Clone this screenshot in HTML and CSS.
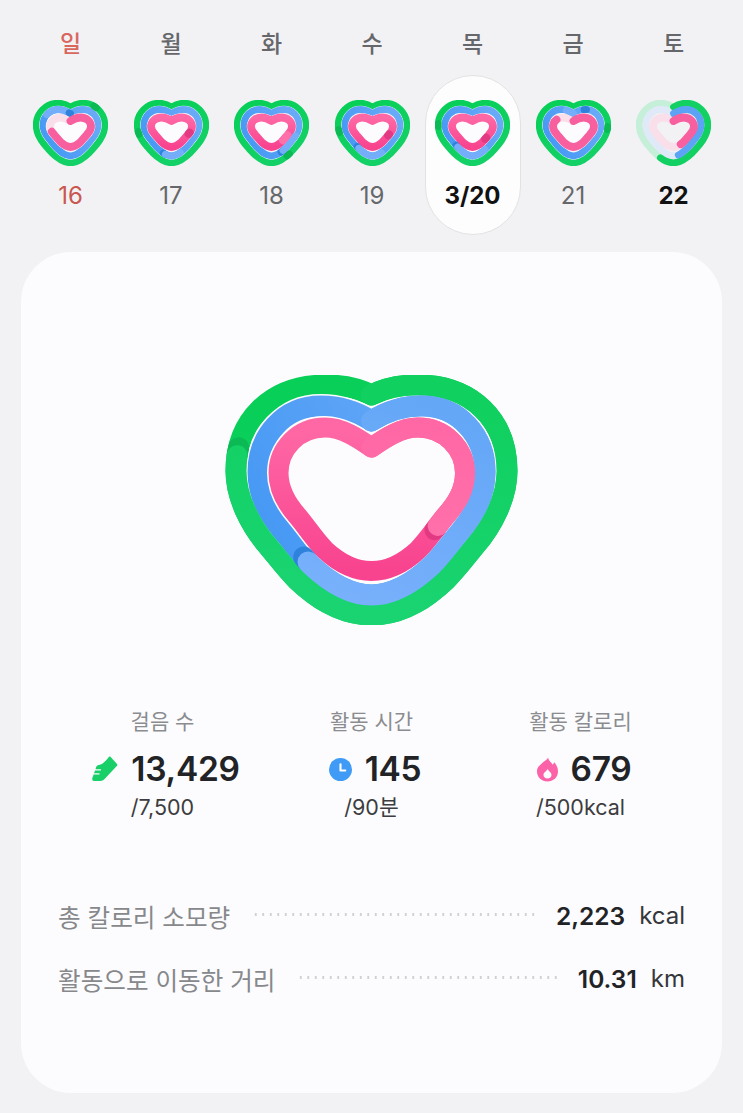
FILE: index.html
```html
<!DOCTYPE html>
<html lang="ko">
<head>
  <meta charset="UTF-8">
  <meta name="viewport" content="width=device-width, initial-scale=1.0">
  <title>투데이</title>
  <link rel="stylesheet" href="styles.css">
</head>
<body>
  <div class="week">
    <div class="day sunday">
      <div class="weekday">일</div>
      <div class="day-box">
        <svg class="heart-small" viewBox="0 0 75 66">
          <defs>
            <path id="mini-green" pathLength="100" d="M37.500 7C41 4.700 45 3.200 50 3.200C62 3.200 71.800 13 71.800 25C71.800 32 68.500 38.500 64 44C61.500 47 59.500 49.500 56.600 52.500C52.500 56.500 46 62.800 37.500 62.800C29 62.800 22.500 56.500 18.400 52.500C15.500 49.500 13.500 47 11 44C6.500 38.500 3.200 32 3.200 25C3.200 13 13 3.200 25 3.200C30 3.200 34 4.700 37.500 7Z"/>
            <path id="mini-blue" pathLength="100" d="M37.500 13.500C41 11.500 45 9.500 49.500 9.500C58 9.500 65 16 65 25C65 30 62.500 35 59 39C56.800 41.500 54.500 44.800 51.800 47.700C48 51.500 43.500 56 37.500 56C31.500 56 27 51.500 23.200 47.700C20.500 44.800 18.200 41.500 16 39C12.500 35 10 30 10 25C10 16 17 9.500 25.500 9.500C30 9.500 34 11.500 37.500 13.500Z"/>
            <path id="mini-pink" pathLength="100" d="M37.500 21C40.500 19 44 17.500 47.500 17.500C53.500 17.500 58 21.500 58 26.500C58 29.500 56.500 31.800 54 34.500C52 36.800 49.500 40 47 42.500C44 45 41 47 37.500 47C34 47 31 45 28 42.500C25.500 40 23 36.800 21 34.500C18.500 31.800 17 29.500 17 26.500C17 21.500 21.500 17.500 27.500 17.500C31 17.500 34.500 19 37.500 21Z"/>
            <g id="mini-green-blue">
              <use href="#mini-green" class="base-green" stroke="url(#grad-green)"/>
              <use href="#mini-blue" class="casing-blue"/>
              <use href="#mini-blue" class="base-blue" stroke="url(#grad-blue)"/>
              <use href="#mini-pink" class="casing-pink"/>
            </g>
            <g id="mini-full">
              <use href="#mini-green-blue"/>
              <use href="#mini-pink" class="base-pink" stroke="url(#grad-pink)"/>
            </g>
            <g id="mini-pale">
              <use href="#mini-green" class="pale-green"/>
              <use href="#mini-blue" class="pale-blue"/>
              <use href="#mini-pink" class="pale-pink"/>
            </g>
          </defs>
          <use href="#mini-green-blue"/>
          <use href="#mini-pink" class="pale-pink"/>
          <use href="#mini-blue" class="over-blue" stroke-dasharray="15 100" stroke-dashoffset="-84"/>
          <use href="#mini-blue" class="shade-blue" stroke-dasharray="1 100" stroke-dashoffset="-99"/>
          <use href="#mini-green" class="shade-green" stroke-dasharray="1.500 100" stroke-dashoffset="-12"/>
          <use href="#mini-pink" class="solid-pink" stroke-dasharray="72 100"/>
        </svg>
        <div class="date">16</div>
      </div>
    </div>
    <div class="day">
      <div class="weekday">월</div>
      <div class="day-box">
        <svg class="heart-small" viewBox="0 0 75 66">
          <use href="#mini-full"/>
          <use href="#mini-green" class="shade-green" stroke-dasharray="1.500 100" stroke-dashoffset="-72"/>
          <use href="#mini-blue" class="shade-blue" stroke-dasharray="1.500 100" stroke-dashoffset="-54"/>
          <use href="#mini-blue" class="over-blue" stroke-dasharray="10 100" stroke-dashoffset="-44"/>
          <use href="#mini-pink" class="shade-pink" stroke-dasharray="1.500 100" stroke-dashoffset="-29"/>
        </svg>
        <div class="date">17</div>
      </div>
    </div>
    <div class="day">
      <div class="weekday">화</div>
      <div class="day-box">
        <svg class="heart-small" viewBox="0 0 75 66">
          <use href="#mini-full"/>
          <use href="#mini-green" class="shade-green" stroke-dasharray="1.500 100" stroke-dashoffset="-40"/>
          <use href="#mini-blue" class="shade-blue" stroke-dasharray="1.500 100" stroke-dashoffset="-42"/>
          <use href="#mini-blue" class="over-blue" stroke-dasharray="12 100" stroke-dashoffset="-30"/>
          <use href="#mini-pink" class="over-pink" stroke-dasharray="6 100" stroke-dashoffset="-32"/>
        </svg>
        <div class="date">18</div>
      </div>
    </div>
    <div class="day">
      <div class="weekday">수</div>
      <div class="day-box">
        <svg class="heart-small" viewBox="0 0 75 66">
          <use href="#mini-full"/>
          <use href="#mini-green" class="shade-green" stroke-dasharray="1.500 100" stroke-dashoffset="-73"/>
          <use href="#mini-blue" class="shade-blue" stroke-dasharray="1.500 100" stroke-dashoffset="-60"/>
          <use href="#mini-blue" class="over-blue" stroke-dasharray="16 100" stroke-dashoffset="-44"/>
          <use href="#mini-pink" class="shade-pink" stroke-dasharray="1.500 100" stroke-dashoffset="-31"/>
        </svg>
        <div class="date">19</div>
      </div>
    </div>
    <div class="day selected">
      <div class="weekday">목</div>
      <div class="day-box">
        <svg class="heart-small" viewBox="0 0 75 66">
          <use href="#mini-full"/>
          <use href="#mini-green" class="shade-green" stroke-dasharray="1.500 100" stroke-dashoffset="-76"/>
          <use href="#mini-blue" class="shade-blue" stroke-dasharray="1.500 100" stroke-dashoffset="-61"/>
          <use href="#mini-blue" class="over-blue" stroke-dasharray="20 100" stroke-dashoffset="-41"/>
          <use href="#mini-pink" class="shade-pink" stroke-dasharray="1.500 100" stroke-dashoffset="-35"/>
        </svg>
        <div class="date">3/20</div>
      </div>
    </div>
    <div class="day">
      <div class="weekday">금</div>
      <div class="day-box">
        <svg class="heart-small" viewBox="0 0 75 66">
          <use href="#mini-green-blue"/>
          <use href="#mini-pink" class="pale-pink"/>
          <use href="#mini-blue" class="over-blue" stroke-dasharray="12 100" stroke-dashoffset="-95"/>
          <use href="#mini-blue" class="shade-blue" stroke-dasharray="1.500 100" stroke-dashoffset="-7"/>
          <use href="#mini-green" class="shade-green" stroke-dasharray="1.500 100" stroke-dashoffset="-24"/>
          <use href="#mini-pink" class="solid-pink" stroke-dasharray="84 100"/>
        </svg>
        <div class="date">21</div>
      </div>
    </div>
    <div class="day today">
      <div class="weekday">토</div>
      <div class="day-box">
        <svg class="heart-small" viewBox="0 0 75 66">
          <use href="#mini-pale"/>
          <use href="#mini-green" class="solid-green" stroke-dasharray="57 100"/>
          <use href="#mini-blue" class="solid-blue" stroke-dasharray="47 100"/>
          <use href="#mini-pink" class="solid-pink" stroke-dasharray="43 100"/>
        </svg>
        <div class="date">22</div>
      </div>
    </div>
  </div>

  <main class="card">
    <svg class="heart-big" viewBox="0 0 293 250">
      <defs>
        <linearGradient id="grad-green" x1="0.2" y1="0" x2="0.6" y2="1">
          <stop offset="0" stop-color="#08cf58"/>
          <stop offset="1" stop-color="#14d167"/>
        </linearGradient>
        <linearGradient id="grad-green-over" x1="0.5" y1="0" x2="0.3" y2="1">
          <stop offset="0" stop-color="#10d05f"/>
          <stop offset="1" stop-color="#1ad472"/>
        </linearGradient>
        <linearGradient id="grad-blue" x1="0" y1="0.7" x2="1" y2="0.2">
          <stop offset="0" stop-color="#4598f4"/>
          <stop offset="1" stop-color="#69aaf8"/>
        </linearGradient>
        <linearGradient id="grad-blue-over" x1="0.8" y1="0" x2="0.3" y2="1">
          <stop offset="0" stop-color="#64a7f7"/>
          <stop offset="1" stop-color="#78b0fb"/>
        </linearGradient>
        <linearGradient id="grad-pink" x1="0.5" y1="0" x2="0.5" y2="1">
          <stop offset="0" stop-color="#ff68a5"/>
          <stop offset="1" stop-color="#f8438f"/>
        </linearGradient>
        <linearGradient id="grad-pink-over" x1="0.5" y1="0" x2="0.5" y2="1">
          <stop offset="0" stop-color="#ff68a5"/>
          <stop offset="1" stop-color="#ff72ac"/>
        </linearGradient>
        <path id="ring-green" pathLength="100" d="M146.500 20C158 14 172 10 192 10C248 10 282 46 282 96C282 122 268 150 250 171C240 183 232 194 221 205C205 220 180 240 146.500 240C113 240 88 220 72 205C61 194 53 183 43 171C25 150 11 122 11 96C11 46 45 10 101 10C121 10 135 14 146.500 20Z"/>
        <path id="ring-blue" pathLength="100" d="M146.500 46C159 38 175 31 197 31C235 31 260 62 260 97C260 120 250 138 235.500 156C226 167 217 180 207 190C190 206 170 220 146.500 220C123 220 103 206 86 190C76 180 67 167 57.500 156C43 138 33 120 33 97C33 62 58 31 96 31C118 31 134 38 146.500 46Z"/>
        <path id="ring-pink" pathLength="100" d="M146.500 72.500C160 63 176 52.500 193 52.500C220 52.500 240 74 240 98C240 115 232 128 220.500 141C212 151 203 165 193 175C180 187 165 196 146.500 196C128 196 113 187 100 175C90 165 81 151 72.500 141C61 128 53.500 115 53.500 98C53.500 74 73 52.500 100 52.500C117 52.500 133 63 146.500 72.500Z"/>
      </defs>
      <use href="#ring-green" class="base-green" stroke="url(#grad-green)"/>
      <use href="#ring-blue" class="casing-blue"/>
      <use href="#ring-blue" class="base-blue" stroke="url(#grad-blue)"/>
      <use href="#ring-pink" class="casing-pink"/>
      <use href="#ring-pink" class="base-pink" stroke="url(#grad-pink)"/>
      <use href="#ring-green" class="shade-green" stroke-dasharray="1 100" stroke-dashoffset="-78.500"/>
      <use href="#ring-green" class="base-green" stroke="url(#grad-green-over)" stroke-dasharray="78.500 100"/>
      <use href="#ring-blue" class="shade-blue" stroke-dasharray="1 100" stroke-dashoffset="-61"/>
      <use href="#ring-blue" class="base-blue" stroke="url(#grad-blue-over)" stroke-dasharray="61 100"/>
      <use href="#ring-pink" class="shade-pink" stroke-dasharray="1 100" stroke-dashoffset="-34.500"/>
      <use href="#ring-pink" class="base-pink" stroke="url(#grad-pink-over)" stroke-dasharray="34.500 100"/>
    </svg>

    <section class="stats">
      <div class="stat">
        <div class="stat-label">걸음 수</div>
        <div class="stat-value">
          <svg class="icon-steps" viewBox="0 0 26 26"><path d="M17 .8C17.500 .3 18.300 .4 18.700 1L25 8C25.500 8.600 25.500 9.300 25 9.800L13.500 22C12 23.700 10.500 25 8 25H2.500C.6 25 -.2 23.500 .4 21.800L1.600 18.500H7C7.800 18.500 7.800 17.300 7 17.300H2L3 14.500H8.500C9.300 14.500 9.300 13.300 8.500 13.300H3.500L4 11.500C4.400 10.200 5.500 9.300 7 9C11 8.200 14.500 4.500 17 .8Z"/></svg>
          <span>13,429</span>
        </div>
        <div class="stat-goal">/7,500</div>
      </div>
      <div class="stat">
        <div class="stat-label">활동 시간</div>
        <div class="stat-value">
          <svg class="icon-clock" viewBox="0 0 24 24"><circle cx="12" cy="12" r="12"/><path d="M12 6.500V13H17"/></svg>
          <span>145</span>
        </div>
        <div class="stat-goal">/90분</div>
      </div>
      <div class="stat">
        <div class="stat-label">활동 칼로리</div>
        <div class="stat-value">
          <svg class="icon-flame" viewBox="0 0 22 26"><path fill-rule="evenodd" d="M11.500 .5C12.500 4.500 15 5.500 16.500 8C17.500 7 17.800 6.300 18 5.500C20.500 8.300 22 11.500 22 15C22 21 17 25.500 11 25.500C5 25.500 0 21 0 15C0 9.500 4.500 7.500 7 5C9 3.500 11 2.500 11.500 .5ZM11.200 12.500C10 15 6.800 16 6.800 18.800C6.800 21 8.700 22.500 11 22.500C13.300 22.500 15.200 21 15.200 18.800C15.200 16 12.200 15 11.200 12.500Z"/></svg>
          <span>679</span>
        </div>
        <div class="stat-goal">/500kcal</div>
      </div>
    </section>

    <section class="totals">
      <div class="total-row">
        <span class="total-label">총 칼로리 소모량</span>
        <span class="total-dots"></span>
        <span class="total-value">2,223</span>
        <span class="total-unit">kcal</span>
      </div>
      <div class="total-row">
        <span class="total-label">활동으로 이동한 거리</span>
        <span class="total-dots"></span>
        <span class="total-value">10.31</span>
        <span class="total-unit">km</span>
      </div>
    </section>
  </main>
</body>
</html>
```

FILE: styles.css
```css
* {
  box-sizing: border-box;
  margin: 0;
  padding: 0;
}

body {
  width: 743px;
  height: 1113px;
  overflow: hidden;
  background-color: #f2f2f4;
  color: #222326;
  font-family: Inter, "Noto Sans CJK KR", "Noto Sans", sans-serif;
}

/* week strip */
.week {
  display: grid;
  grid-template-columns: repeat(7, 100.5px);
  justify-content: center;
  padding: 26px 0 0 1px;
}

.day {
  display: flex;
  flex-direction: column;
  align-items: center;
}

.weekday {
  height: 33px;
  line-height: 33px;
  font-family: "Noto Sans CJK KR", sans-serif;
  font-size: 23px;
  font-weight: 500;
  color: #66676a;
}

.sunday .weekday {
  color: #d9675f;
}

.day-box {
  display: flex;
  flex-direction: column;
  align-items: center;
  width: 96px;
  height: 160px;
  margin-top: 16px;
  padding-top: 24px;
  border: 1px solid transparent;
  border-radius: 48px;
}

.selected .day-box {
  background-color: #fdfdfe;
  border-color: #e2e2e4;
}

.date {
  margin-top: 15px;
  font-size: 24px;
  line-height: 30px;
  color: #66676a;
}

.sunday .date {
  color: #c9574f;
}

.selected .date,
.today .date {
  font-weight: 700;
  color: #111;
}

/* heart rings, stroke widths come from the svg they are drawn in */
.heart-small {
  --green: 6.8px;
  --blue: 6.8px;
  --pink: 7.8px;
  --casing-blue: 7.5px;
  --casing-pink: 8.5px;
  display: block;
  width: 75px;
  height: 66px;
  flex: none;
}

.heart-big {
  --green: 21px;
  --blue: 21px;
  --pink: 20px;
  --casing-blue: 24px;
  --casing-pink: 23px;
  display: block;
  width: 293px;
  height: 250px;
  flex: none;
}

.base-green,
.base-blue,
.base-pink,
.casing-blue,
.over-blue,
.over-pink,
.shade-green,
.shade-blue,
.shade-pink,
.solid-green,
.solid-blue,
.solid-pink,
.pale-green,
.pale-blue,
.pale-pink {
  fill: none;
  stroke-linecap: round;
  stroke-linejoin: round;
}

.base-green,
.shade-green,
.solid-green,
.pale-green {
  stroke-width: var(--green);
}

.base-blue,
.over-blue,
.shade-blue,
.solid-blue,
.pale-blue {
  stroke-width: var(--blue);
}

.base-pink,
.over-pink,
.shade-pink,
.solid-pink,
.pale-pink {
  stroke-width: var(--pink);
}

.casing-blue {
  stroke: #fdfdfe;
  stroke-width: var(--casing-blue);
}

.casing-pink {
  fill: #fcfbfd;
  stroke: #fdfdfe;
  stroke-width: var(--casing-pink);
  stroke-linejoin: round;
}

.shade-green { stroke: #0bb955; }
.solid-green { stroke: #12d062; }
.pale-green { stroke: #c6efd9; }

.over-blue { stroke: #74aefb; }
.shade-blue { stroke: #2f82dc; }
.solid-blue { stroke: #5ca2f5; }
.pale-blue { stroke: #dfe9f8; }

.over-pink { stroke: #ff70ab; }
.shade-pink { stroke: #e23a82; }
.solid-pink { stroke: #f85f9f; }
.pale-pink { stroke: #f8dfe9; }

/* main card */
.card {
  display: flex;
  flex-direction: column;
  align-items: center;
  width: 701px;
  height: 841px;
  margin: 17px 0 0 21px;
  padding: 123px 37px 0;
  background-color: #fcfcfe;
  border-radius: 50px;
}

.stats {
  display: grid;
  grid-template-columns: repeat(3, 1fr);
  width: 100%;
  margin-top: 80px;
}

.stat {
  display: flex;
  flex-direction: column;
  align-items: center;
}

.stat-label {
  font-family: "Noto Sans CJK KR", sans-serif;
  font-size: 21px;
  line-height: 30px;
  color: #8b8c8f;
}

.stat-value {
  display: flex;
  align-items: center;
  gap: 13px;
  height: 46px;
  margin-top: 11px;
  padding-left: 7px;
  font-size: 33.5px;
  font-weight: 600;
  line-height: 46px;
  letter-spacing: -0.3px;
}

.icon-steps {
  display: block;
  width: 26px;
  height: 26px;
  fill: #19cf68;
}

.icon-clock {
  display: block;
  width: 23px;
  height: 23px;
  fill: #3f9bf5;
}

.icon-clock path {
  fill: none;
  stroke: #fff;
  stroke-width: 2.2px;
  stroke-linecap: round;
  stroke-linejoin: round;
}

.icon-flame {
  display: block;
  width: 21px;
  height: 25px;
  fill: #fb62a8;
}

.stat-goal {
  font-size: 21.5px;
  line-height: 30px;
  color: #3c3d40;
}

/* totals */
.totals {
  display: flex;
  flex-direction: column;
  gap: 27px;
  width: 100%;
  margin-top: 76px;
}

.total-row {
  display: flex;
  align-items: center;
  height: 36px;
}

.total-label {
  font-family: "Noto Sans CJK KR", sans-serif;
  font-size: 24.6px;
  line-height: 36px;
  color: #87888b;
}

.total-dots {
  flex: 1;
  height: 3px;
  margin: 0 21px 3px 22px;
  background-image: radial-gradient(circle, #cfd0d3 1.1px, transparent 1.4px);
  background-size: 7.5px 3px;
  background-repeat: repeat-x;
}

.total-value {
  font-size: 24.5px;
  font-weight: 600;
  line-height: 36px;
}

.total-unit {
  margin-left: 14px;
  font-size: 24px;
  line-height: 36px;
  color: #36373a;
}
```
